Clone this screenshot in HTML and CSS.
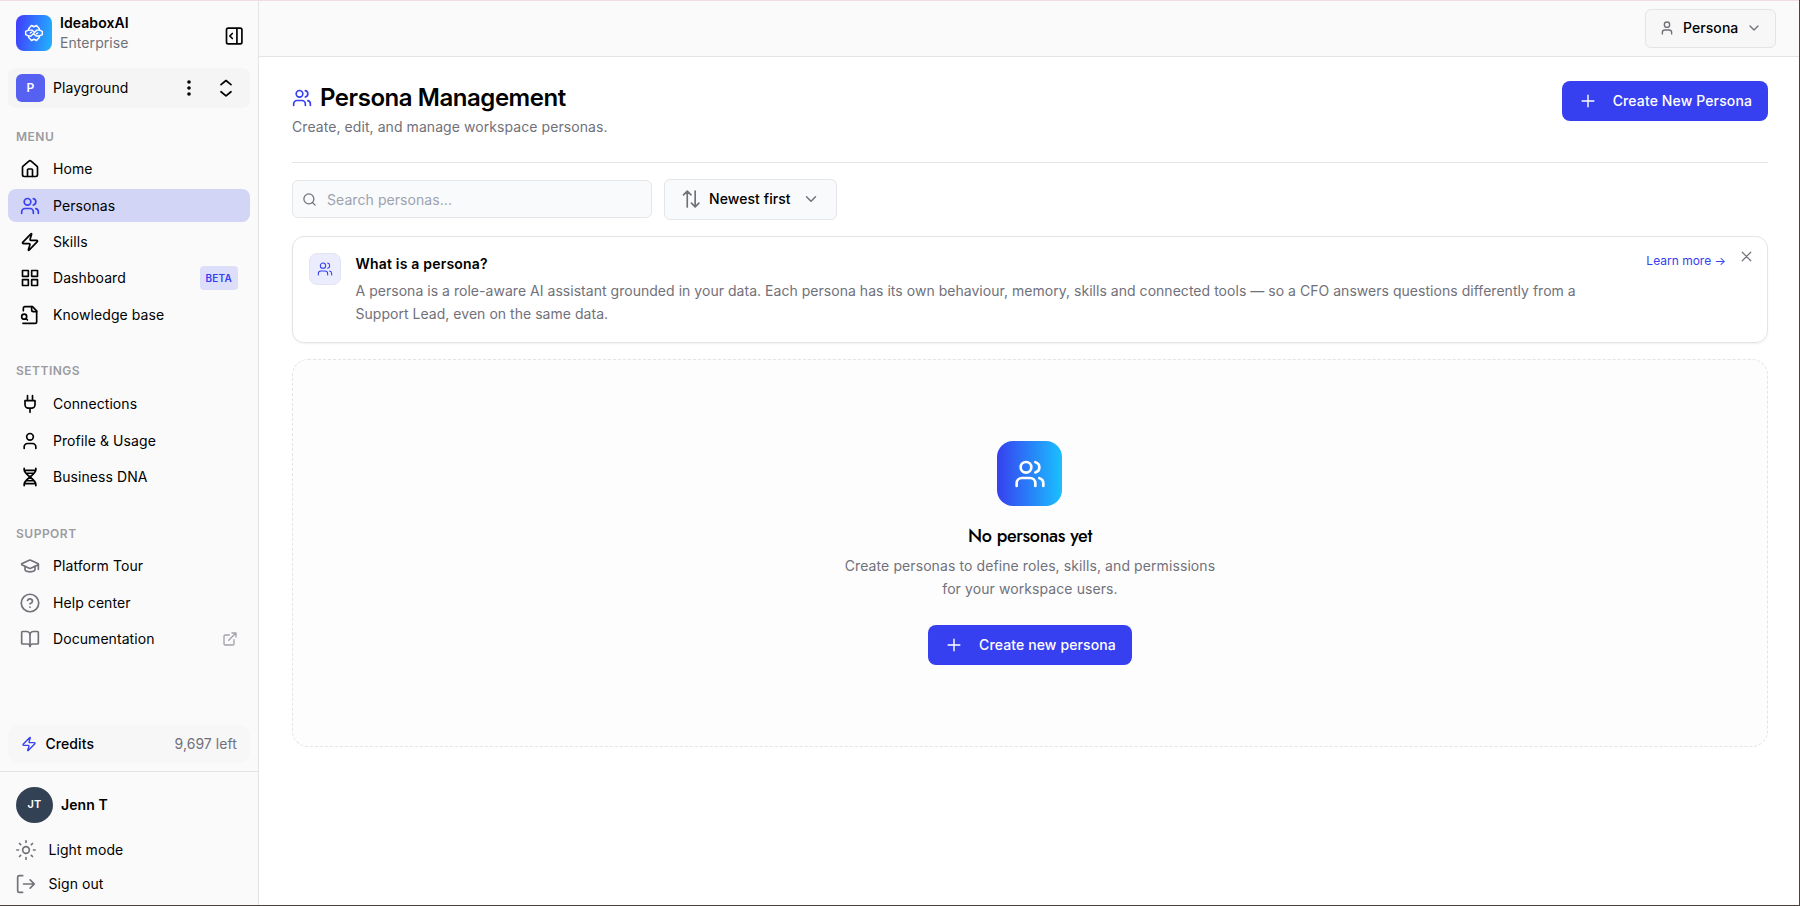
FILE: index.html
```html
<!DOCTYPE html>
<html lang="en">
<head>
  <meta charset="UTF-8">
  <meta name="viewport" content="width=device-width, initial-scale=1.0">
  <title>Persona Management - IdeaboxAI</title>
  <link rel="stylesheet" href="styles.css">
</head>
<body>
  <!-- Shared icons -->
  <svg class="sprite">
    <symbol id="i-users" viewBox="0 0 24 24"><path d="M16 21v-2a4 4 0 0 0-4-4H6a4 4 0 0 0-4 4v2"/><circle cx="9" cy="7" r="4"/><path d="M22 21v-2a4 4 0 0 0-3-3.87"/><path d="M16 3.13a4 4 0 0 1 0 7.75"/></symbol>
    <symbol id="i-user" viewBox="0 0 24 24"><path d="M19 21v-2a4 4 0 0 0-4-4H9a4 4 0 0 0-4 4v2"/><circle cx="12" cy="7" r="4"/></symbol>
    <symbol id="i-zap" viewBox="0 0 24 24"><path d="M4 14a1 1 0 0 1-.78-1.63l9.9-10.2a.5.5 0 0 1 .86.46l-1.92 6.02A1 1 0 0 0 13 10h7a1 1 0 0 1 .78 1.63l-9.9 10.2a.5.5 0 0 1-.86-.46l1.92-6.02A1 1 0 0 0 11 14z"/></symbol>
    <symbol id="i-plus" viewBox="0 0 24 24"><path d="M5 12h14M12 5v14"/></symbol>
    <symbol id="i-down" viewBox="0 0 24 24"><path d="m6 9 6 6 6-6"/></symbol>
  </svg>

  <div class="app">
    <aside class="sidebar">
      <div class="brand">
        <div class="brand-logo">
          <svg class="icon" viewBox="0 0 24 24"><path d="M5.500 8.500V7L9 3l3 1.500L15 3l3.500 4v1.500M5.500 15.500V17L9 21l3-1.500 3 1.500 3.500-4v-1.500M5.500 8.500 2 10v4l3.500 1.500M18.500 8.500 22 10v4l-3.500 1.500"/><path d="M5.500 8.500h4l2.500 2M18.500 15.500h-4l-2.500-2M5.500 15.500h3l7-7h3M7.500 12l1.500-1M16.500 12 15 13"/></svg>
        </div>
        <div class="brand-text">
          <strong>IdeaboxAI</strong>
          <span>Enterprise</span>
        </div>
        <svg class="icon icon-20" viewBox="0 0 24 24"><rect x="3" y="2.500" width="18.500" height="19" rx="2"/><path d="M15.500 3v18M10 9l-3 3 3 3"/></svg>
      </div>

      <div class="workspace">
        <span class="workspace-badge">P</span>
        <span class="workspace-name">Playground</span>
        <svg class="icon icon-18 dots" viewBox="0 0 24 24"><circle cx="12" cy="12" r="1.400"/><circle cx="12" cy="4" r="1.400"/><circle cx="12" cy="20" r="1.400"/></svg>
        <svg class="icon icon-20" viewBox="0 0 24 24"><path d="m6 16.500 6 5 6-5M6 8l6-5 6 5"/></svg>
      </div>

      <nav class="nav">
        <h2 class="nav-title">MENU</h2>
        <a class="nav-item"><svg class="icon" viewBox="0 0 24 24"><path d="M15 21v-8a1 1 0 0 0-1-1h-4a1 1 0 0 0-1 1v8"/><path d="M3 10a2 2 0 0 1 .709-1.528l7-5.999a2 2 0 0 1 2.582 0l7 5.999A2 2 0 0 1 21 10v9a2 2 0 0 1-2 2H5a2 2 0 0 1-2-2z"/></svg>Home</a>
        <a class="nav-item active"><svg class="icon"><use href="#i-users"/></svg>Personas</a>
        <a class="nav-item"><svg class="icon"><use href="#i-zap"/></svg>Skills</a>
        <a class="nav-item"><svg class="icon" viewBox="0 0 24 24"><rect x="3" y="3" width="7" height="7"/><rect x="14" y="3" width="7" height="7"/><rect x="14" y="14" width="7" height="7"/><rect x="3" y="14" width="7" height="7"/></svg>Dashboard<span class="beta">BETA</span></a>
        <a class="nav-item"><svg class="icon" viewBox="0 0 24 24"><path d="M14 2v4a2 2 0 0 0 2 2h4"/><path d="M3.500 22H18a2 2 0 0 0 2-2V7l-5-5H6a2 2 0 0 0-2 2v3"/><path d="m9 18-1.500-1.500"/><circle cx="5" cy="14" r="3"/></svg>Knowledge base</a>

        <h2 class="nav-title">SETTINGS</h2>
        <a class="nav-item"><svg class="icon" viewBox="0 0 24 24"><path d="M12 22v-5M9 8V2M15 8V2M18 8v5a4 4 0 0 1-4 4h-4a4 4 0 0 1-4-4V8Z"/></svg>Connections</a>
        <a class="nav-item"><svg class="icon"><use href="#i-user"/></svg>Profile &amp; Usage</a>
        <a class="nav-item"><svg class="icon" viewBox="0 0 24 24"><path d="M5 1.500v2c0 5.500 14 11.500 14 17v2M19 1.500v2c0 5.500-14 11.500-14 17v2M5.500 4h13M5.500 20h13M7.500 7.500h9M7.500 16.500h9"/></svg>Business DNA</a>

        <h2 class="nav-title">SUPPORT</h2>
        <a class="nav-item muted"><svg class="icon" viewBox="0 0 24 24"><path d="M21.420 10.922a1 1 0 0 0-.019-1.838L12.830 5.180a2 2 0 0 0-1.660 0L2.600 9.080a1 1 0 0 0 0 1.832l8.570 3.908a2 2 0 0 0 1.660 0z"/><path d="M22 10v6"/><path d="M6 12.500V16a6 3 0 0 0 12 0v-3.500"/></svg>Platform Tour</a>
        <a class="nav-item muted"><svg class="icon" viewBox="0 0 24 24"><circle cx="12" cy="12" r="10.500"/><path d="M9.090 9a3 3 0 0 1 5.830 1c0 2-3 3-3 3M12 17h.01"/></svg>Help center</a>
        <a class="nav-item muted"><svg class="icon" viewBox="0 0 24 24"><path d="M12 7v14"/><path d="M3 18a1 1 0 0 1-1-1V4a1 1 0 0 1 1-1h5a4 4 0 0 1 4 4 4 4 0 0 1 4-4h5a1 1 0 0 1 1 1v13a1 1 0 0 1-1 1h-6a3 3 0 0 0-3 3 3 3 0 0 0-3-3z"/></svg>Documentation<svg class="icon external" viewBox="0 0 24 24"><path d="M15 3h6v6M10 14 21 3M18 13v6a2 2 0 0 1-2 2H5a2 2 0 0 1-2-2V8a2 2 0 0 1 2-2h6"/></svg></a>
      </nav>

      <div class="credits">
        <svg class="icon"><use href="#i-zap"/></svg>
        <span class="credits-label">Credits</span>
        <span class="credits-left">9,697 left</span>
      </div>

      <div class="account">
        <div class="account-user">
          <span class="avatar">JT</span>
          <span class="account-name">Jenn T</span>
        </div>
        <a class="account-link"><svg class="icon" viewBox="0 0 24 24"><circle cx="12" cy="12" r="4"/><path d="M12 1v2M12 21v2M4.200 4.200l1.400 1.400M18.400 18.400l1.400 1.400M1 12h2M21 12h2M5.600 18.400l-1.400 1.400M19.800 4.200l-1.400 1.400"/></svg>Light mode</a>
        <a class="account-link"><svg class="icon" viewBox="0 0 24 24"><path d="M8 22H4a2 2 0 0 1-2-2V4a2 2 0 0 1 2-2h4M17 17l5-5-5-5M22 12H9"/></svg>Sign out</a>
      </div>
    </aside>

    <div class="main">
      <header class="topbar">
        <button class="persona-select">
          <svg class="icon"><use href="#i-user"/></svg>
          Persona
          <svg class="icon"><use href="#i-down"/></svg>
        </button>
      </header>

      <main class="content">
        <div class="page-head">
          <div>
            <h1><svg class="icon icon-20"><use href="#i-users"/></svg>Persona Management</h1>
            <p>Create, edit, and manage workspace personas.</p>
          </div>
          <button class="btn"><svg class="icon icon-20"><use href="#i-plus"/></svg>Create New Persona</button>
        </div>

        <div class="filters">
          <div class="search">
            <svg class="icon" viewBox="0 0 24 24"><circle cx="11" cy="11" r="8"/><path d="m21 21-4.300-4.300"/></svg>
            <input type="text" placeholder="Search personas...">
          </div>
          <button class="sort">
            <svg class="icon icon-20" viewBox="0 0 24 24"><path d="M3 7l4.500-4.500L12 7M7.500 2.500v19M21.500 17 17 21.500 12.500 17M17 21.500v-19"/></svg>
            Newest first
            <svg class="icon icon-18"><use href="#i-down"/></svg>
          </button>
        </div>

        <section class="info">
          <div class="info-icon"><svg class="icon"><use href="#i-users"/></svg></div>
          <div class="info-text">
            <h3>What is a persona?</h3>
            <p>A persona is a role-aware AI assistant grounded in your data. Each persona has its own behaviour, memory, skills and connected tools — so a CFO answers questions differently from a Support Lead, even on the same data.</p>
          </div>
          <a class="learn-more">Learn more →</a>
          <svg class="icon close" viewBox="0 0 24 24"><path d="M18 6 6 18M6 6l12 12"/></svg>
        </section>

        <section class="empty">
          <div class="empty-icon"><svg class="icon"><use href="#i-users"/></svg></div>
          <h3>No personas yet</h3>
          <p>Create personas to define roles, skills, and permissions for your workspace users.</p>
          <button class="btn"><svg class="icon icon-20"><use href="#i-plus"/></svg>Create new persona</button>
        </section>
      </main>
    </div>
  </div>
</body>
</html>
```
FILE: styles.css
```css
* {
  box-sizing: border-box;
}
body {
  margin: 0;
  height: 906px;
  overflow: hidden;
  padding: 0 1px 1px 0;
  background: #4b4140;
  color: #000;
  font-family: Inter, "Liberation Sans", sans-serif;
  font-size: 14px;
  line-height: 20px;
  letter-spacing: 0.07px;
}
h1, h2, h3, p {
  margin: 0;
}
button {
  font: inherit;
  color: inherit;
  letter-spacing: inherit;
  cursor: pointer;
}
.sprite {
  display: none;
}
.icon {
  width: 20px;
  height: 20px;
  flex-shrink: 0;
  fill: none;
  stroke: currentColor;
  stroke-width: 2;
  stroke-linecap: round;
  stroke-linejoin: round;
}
.icon-18 {
  width: 18px;
  height: 18px;
}
.app {
  display: flex;
  height: 905px;
  background: #fff;
  border-top: 1px solid #f1dce6;
}

/* Sidebar */
.sidebar {
  width: 259px;
  flex-shrink: 0;
  display: flex;
  flex-direction: column;
  background: #fafafa;
  border-right: 1px solid #e4e4e7;
}
.brand {
  display: flex;
  align-items: center;
  height: 67px;
  padding: 0 14px 3px 16px;
}
.brand-logo {
  display: flex;
  align-items: center;
  justify-content: center;
  width: 36px;
  height: 36px;
  border-radius: 8px;
  background: linear-gradient(100deg, #4338ff, #1fb6ff);
  color: #fff;
}
.brand-logo .icon {
  stroke-width: 1.700;
}
.brand-text {
  display: flex;
  flex-direction: column;
  flex: 1;
  margin-left: 8px;
}
.brand-text strong {
  font-weight: 600;
}
.brand-text span {
  color: #71717a;
}
.brand > .icon {
  margin-top: 6px;
}
.workspace {
  display: flex;
  align-items: center;
  height: 40px;
  margin: 0 8px;
  padding: 0 14px 0 8px;
  border-radius: 8px;
  background: #f5f5f5;
}
.workspace-badge {
  width: 29px;
  height: 28px;
  border-radius: 6px;
  background: #5661f2;
  color: #fff;
  font-size: 12px;
  font-weight: 600;
  line-height: 28px;
  text-align: center;
}
.workspace-name {
  flex: 1;
  margin-left: 8px;
}
.dots {
  margin-right: 18px;
  fill: currentColor;
}
.nav {
  flex: 1;
  padding: 21px 8px 0;
}
.nav-title {
  margin: 32.400px 8px 8.600px;
  color: #9b9ba1;
  font-size: 12px;
  font-weight: 600;
  line-height: 16px;
  letter-spacing: 0.5px;
}
.nav-title:first-child {
  margin: 0 8px 8px;
}
.nav-item {
  display: flex;
  align-items: center;
  height: 32.400px;
  margin-bottom: 4px;
  padding: 0 12px;
  border-radius: 8px;
}
.nav-item > .icon:first-child {
  margin-right: 13px;
}
.nav-item.active {
  background: #d2d5f6;
}
.nav-item.active .icon {
  color: #3640f0;
}
.nav-item.muted .icon {
  color: #71717a;
}
.beta {
  margin-left: auto;
  padding: 0 6px;
  border-radius: 4px;
  background: #dddffa;
  color: #3640f0;
  font-size: 10px;
  font-weight: 600;
  line-height: 24px;
  letter-spacing: 0.2px;
}
.nav-item.muted .external {
  width: 16px;
  height: 16px;
  margin-left: auto;
  color: #a1a1aa;
}
.credits {
  display: flex;
  align-items: center;
  height: 38px;
  margin: 0 8px 8px;
  padding: 0 13px;
  border-radius: 12px;
  background: #f7f7f7;
}
.credits .icon {
  width: 16px;
  height: 16px;
  color: #3640f0;
}
.credits-label {
  flex: 1;
  margin-left: 8.500px;
  font-weight: 500;
}
.credits-left {
  color: #71717a;
}
.account {
  height: 134px;
  padding: 15px 16px 0;
  border-top: 1px solid #e4e4e7;
}
.account-user {
  display: flex;
  align-items: center;
  gap: 8px;
  margin-bottom: 10px;
}
.avatar {
  width: 37px;
  height: 36px;
  border-radius: 50%;
  background: #334155;
  color: #fff;
  font-size: 11px;
  font-weight: 600;
  line-height: 35px;
  text-align: center;
}
.account-name {
  font-weight: 600;
}
.account-link {
  display: flex;
  align-items: center;
  gap: 12.500px;
  height: 34px;
}
.account-link .icon {
  color: #71717a;
}

/* Top bar */
.main {
  flex: 1;
  min-width: 0;
}
.topbar {
  display: flex;
  align-items: center;
  justify-content: flex-end;
  height: 56px;
  padding: 0 23px 1px 0;
  background: #fafafa;
  border-bottom: 1px solid #e4e4e7;
}
.persona-select {
  display: flex;
  align-items: center;
  width: 131px;
  height: 39px;
  padding: 0 13px;
  border: 1px solid #e4e4e7;
  border-radius: 6px;
  background: #f7f7f8;
  font-weight: 500;
}
.persona-select .icon {
  width: 16px;
  height: 16px;
  color: #71717a;
}
.persona-select .icon:first-child {
  margin-right: 8px;
}
.persona-select .icon:last-child {
  margin-left: auto;
}

/* Page */
.content {
  padding: 24px 31px 0 33px;
}
.page-head {
  display: flex;
  align-items: flex-start;
  justify-content: space-between;
  height: 82px;
  border-bottom: 1px solid #e4e4e7;
}
.page-head h1 {
  display: flex;
  align-items: center;
  gap: 8px;
  padding-top: 1px;
  font-size: 24px;
  font-weight: 600;
  line-height: 32px;
  letter-spacing: -0.450px;
}
.page-head h1 .icon {
  color: #3640f0;
}
.page-head p {
  margin-top: 3px;
  color: #71717a;
}
.btn {
  display: flex;
  align-items: center;
  gap: 15px;
  height: 40px;
  padding: 0 16px;
  border: none;
  border-radius: 8px;
  background: #3640f0;
  color: #fff;
  font-weight: 500;
  letter-spacing: 0.120px;
}
.btn .icon {
  stroke-width: 1.700;
}
.filters {
  display: flex;
  align-items: center;
  gap: 12px;
  margin: 16px 0;
}
.search {
  display: flex;
  align-items: center;
  gap: 10px;
  width: 360px;
  height: 38px;
  margin-bottom: 1px;
  padding: 0 9px;
  border: 1px solid #e4e6ea;
  border-radius: 6px;
  background: #f9fafb;
}
.search .icon {
  width: 15px;
  height: 15px;
  color: #71717a;
}
.search input {
  flex: 1;
  padding: 1px 0 0;
  border: none;
  outline: none;
  background: none;
  font: inherit;
  letter-spacing: inherit;
}
.search input::placeholder {
  color: #9ca3af;
}
.sort {
  display: flex;
  align-items: center;
  width: 173px;
  height: 41px;
  padding: 0 16px 1px;
  border: 1px solid #e4e6ea;
  border-radius: 6px;
  background: #f9fafb;
  font-weight: 500;
}
.sort .icon {
  color: #71717a;
}
.sort .icon:first-child {
  margin-right: 8px;
}
.sort .icon:last-child {
  margin-left: auto;
}
.info {
  display: flex;
  align-items: flex-start;
  height: 107px;
  padding: 16px 12px 0 16px;
  border: 1px solid #e4e4e7;
  border-radius: 12px;
  box-shadow: 0 1px 2px rgba(0, 0, 0, 0.06);
}
.info-icon {
  display: flex;
  align-items: center;
  justify-content: center;
  width: 32px;
  height: 32px;
  border: 1px solid #e4e4ef;
  border-radius: 8px;
  background: #ebecfd;
  color: #3640f0;
}
.info-icon .icon {
  width: 16px;
  height: 16px;
  stroke-width: 1.600;
}
.info-text {
  width: 1240px;
  margin-left: 14.500px;
}
.info-text h3 {
  font-size: 14px;
  font-weight: 600;
  line-height: 21px;
  letter-spacing: 0.2px;
}
.info-text p {
  margin-top: 5px;
  color: #71717a;
  line-height: 23px;
  letter-spacing: 0.032px;
}
.learn-more {
  margin: -2px 12px 0 auto;
  color: #3640f0;
  font-size: 12px;
  letter-spacing: 0;
}
.close {
  width: 17px;
  height: 17px;
  margin-top: -5px;
  color: #71717a;
  stroke-width: 1.700;
}
.empty {
  display: flex;
  flex-direction: column;
  align-items: center;
  height: 388px;
  margin-top: 16px;
  padding-top: 81px;
  border: 1px dashed #e4e4e7;
  border-radius: 16px;
  background: #fdfdfd;
}
.empty-icon {
  display: flex;
  align-items: center;
  justify-content: center;
  width: 65px;
  height: 65px;
  margin-right: 1px;
  border-radius: 16px;
  background: linear-gradient(90deg, #3640f0, #1bc0ff);
  color: #fff;
}
.empty-icon .icon {
  width: 32px;
  height: 32px;
}
.empty h3 {
  margin-top: 16px;
  font-family: Jost, Lato, sans-serif;
  font-size: 18px;
  font-weight: 500;
  line-height: 28px;
  letter-spacing: -0.350px;
}
.empty p {
  width: 384px;
  margin-top: 4px;
  color: #71717a;
  line-height: 23px;
  letter-spacing: 0.090px;
  text-align: center;
}
.empty .btn {
  margin-top: 25px;
}
```
